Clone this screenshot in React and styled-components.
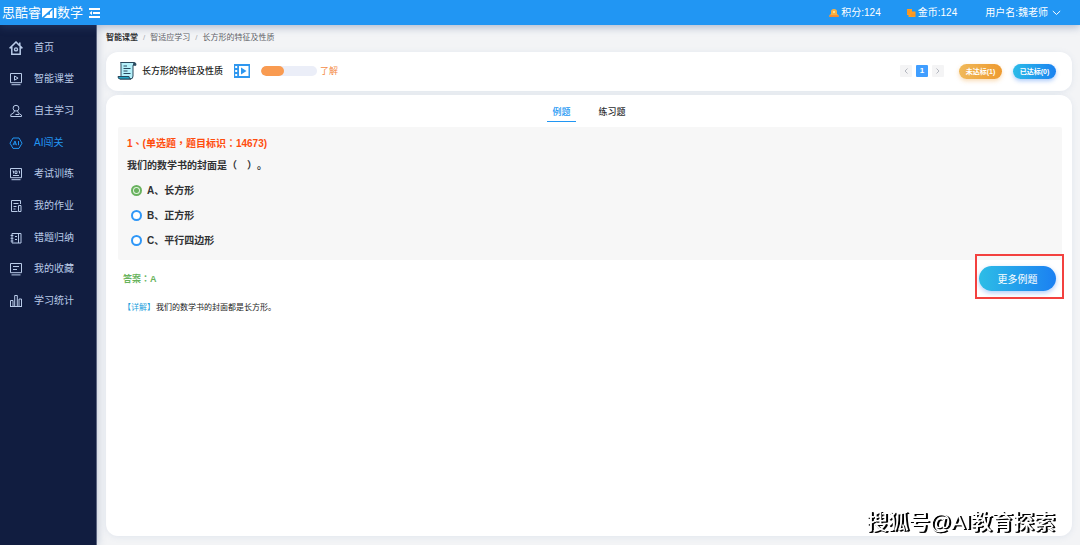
import React, { useState } from "react";
import styled, { createGlobalStyle } from "styled-components";

const GlobalStyle = createGlobalStyle`
  * {
    box-sizing: border-box;
  }
  body {
    margin: 0;
    background: #f3f4f6;
    color: #303133;
    font-family: "Liberation Sans", "Noto Sans CJK SC", sans-serif;
    font-size: 10px;
    line-height: 14px;
  }
  button, input {
    font-family: inherit;
    margin: 0;
  }
  svg {
    display: block;
    flex: none;
  }
`;

const Page = styled.div`
  display: flex;
  flex-direction: column;
  min-height: 100vh;
`;

const Header = styled.header`
  display: flex;
  align-items: center;
  justify-content: space-between;
  height: 25px;
  padding: 0 19px 0 2px;
  color: #fff;
  background: #2196f3;
  box-shadow: 0 2px 8px rgba(60, 90, 140, 0.4);
  z-index: 2;
`;

const Brand = styled.div`
  display: flex;
  align-items: center;
  font-size: 13px;
  line-height: 18px;
`;

const IconButton = styled.button`
  display: flex;
  padding: 0;
  margin-left: 6px;
  border: 0;
  color: inherit;
  background: none;
  cursor: pointer;
`;

const Account = styled.div`
  display: flex;
  align-items: center;
  gap: 25px;
`;

const Stat = styled.span`
  display: flex;
  align-items: center;
  gap: 2px;
`;

const UserButton = styled.button`
  display: flex;
  align-items: center;
  gap: 4px;
  margin-left: 3px;
  padding: 0;
  border: 0;
  color: inherit;
  font-size: 10px;
  line-height: 14px;
  background: none;
  cursor: pointer;
`;

const Body = styled.div`
  display: flex;
  flex: 1;
`;

const Sidebar = styled.nav`
  flex: none;
  width: 97px;
  padding-top: 7px;
  background: #111d40;
  border-right: 1px solid #5c6580;
  box-shadow: 1px 0 8px rgba(60, 90, 140, 0.25);
  z-index: 1;
`;

const NavList = styled.ul`
  display: grid;
  grid-auto-rows: 1fr;
  height: 285px;
  margin: 0;
  padding: 0;
  list-style: none;
`;

const NavLink = styled.a`
  display: flex;
  align-items: center;
  gap: 11px;
  height: 100%;
  padding-left: 9px;
  color: ${(props) => (props.$active ? "#2196f3" : "#b9cbe8")};
  text-decoration: none;
`;

const Main = styled.main`
  display: flex;
  flex: 1;
  flex-direction: column;
  min-width: 0;
  padding: 6px 8px 9px 9px;
`;

const Breadcrumb = styled.nav`
  display: flex;
  gap: 5px;
  margin-bottom: 7px;
  color: #606266;
  font-size: 8px;
  span {
    color: #a8abb2;
  }
`;

const Crumb = styled.a`
  color: ${(props) => (props.$root ? "#303133" : "#606266")};
  font-weight: ${(props) => (props.$root ? 700 : 400)};
  text-decoration: none;
`;

const Card = styled.section`
  border-radius: 12px;
  background: #fff;
  box-shadow: 0 1px 6px rgba(100, 130, 180, 0.12);
`;

const TopicCard = styled(Card)`
  display: flex;
  align-items: center;
  height: 39px;
  margin-bottom: 4px;
  padding: 0 16px 1px 11px;
`;

const TopicTitle = styled.h1`
  margin: 0 11px 0 5px;
  font-size: 9px;
  font-weight: 500;
  color: #222;
`;

const Progress = styled.div`
  width: 56px;
  height: 10px;
  margin: 0 3px 0 11px;
  border-radius: 5px;
  background: #ebeef8;
  overflow: hidden;
`;

const ProgressFill = styled.div`
  height: 100%;
  border-radius: 5px;
  background: #f99b51;
`;

const Level = styled.span`
  color: #f48b48;
  font-size: 9px;
`;

const Pager = styled.div`
  display: flex;
  gap: 4px;
  margin: 0 15px 0 auto;
`;

const PageButton = styled.button`
  display: flex;
  align-items: center;
  justify-content: center;
  width: 12px;
  height: 12px;
  padding: 0;
  border: 0;
  border-radius: 1px;
  font-size: 8px;
  font-weight: 700;
  line-height: 12px;
  color: ${(props) => (props.$active ? "#fff" : "#b4b7bf")};
  background: ${(props) => (props.$active ? "#409eff" : "#f4f4f5")};
`;

const Pill = styled.button`
  min-width: 43px;
  height: 15px;
  margin-left: ${(props) => (props.$tone === "blue" ? "11px" : "0")};
  padding: 0;
  border: 0;
  border-radius: 8px;
  color: #fff;
  font-size: 7px;
  font-weight: 700;
  line-height: 15px;
  background: ${(props) =>
    props.$tone === "blue"
      ? "linear-gradient(90deg, #2bbbe8, #1a82f0)"
      : "linear-gradient(90deg, #f0b95a, #ee9a30)"};
  box-shadow: 0 2px 4px
    ${(props) =>
      props.$tone === "blue"
        ? "rgba(26, 110, 240, 0.35)"
        : "rgba(238, 154, 48, 0.35)"};
`;

const ContentCard = styled(Card)`
  flex: 1;
  padding: 7px 10px 10px 12px;
`;

const Tabs = styled.div`
  display: flex;
  justify-content: center;
  gap: 18px;
  margin-bottom: 5px;
  padding-right: 2px;
`;

const Tab = styled.button`
  height: 20px;
  padding: 0 5px;
  border: 0;
  border-bottom: 1px solid
    ${(props) => (props.$active ? "#2196f3" : "transparent")};
  color: ${(props) => (props.$active ? "#2196f3" : "#303133")};
  font-size: 9px;
  font-weight: 500;
  background: none;
  cursor: pointer;
`;

const Question = styled.fieldset`
  min-width: 0;
  margin: 0;
  padding: 10px 9px 7px;
  border: 0;
  border-radius: 2px;
  font-weight: 700;
  background: #f7f7f7;
`;

/* TC punctuation sits in the middle of its cell */
const QuestionMeta = styled.p`
  margin: 0 0 8px;
  color: #ff4d0d;
  font-family: "Liberation Sans", "Noto Sans CJK TC", sans-serif;
`;

const QuestionText = styled.p`
  margin: 0 0 5px;
  text-spacing-trim: space-all;
`;

const Option = styled.label`
  display: flex;
  align-items: center;
  gap: 5px;
  height: 25px;
  padding-left: 4px;
  cursor: pointer;
`;

const Radio = styled.input`
  appearance: none;
  width: 11px;
  height: 11px;
  border: 2px solid #2f97f7;
  border-radius: 50%;
  background: #fff;
  &:checked {
    border-color: #69b25f;
    background: radial-gradient(#69b25f 2px, #e4f3e0 3px);
  }
`;

const AnswerRow = styled.div`
  display: flex;
  align-items: center;
  justify-content: space-between;
  margin-bottom: 10px;
  padding: 6px 6px 0 5px;
`;

const Answer = styled.strong`
  color: #68b35c;
  font-family: "Liberation Sans", "Noto Sans CJK TC", sans-serif;
  font-size: 9px;
`;

const MoreWrap = styled.div`
  position: relative;
`;

const Highlight = styled.div`
  position: absolute;
  inset: -12px -8px -8px -4px;
  border: 2px solid #f3413f;
  pointer-events: none;
`;

const MoreButton = styled.button`
  display: block;
  width: 77px;
  height: 25px;
  padding: 0;
  border: 0;
  border-radius: 13px;
  color: #fff;
  font-size: 10px;
  background: linear-gradient(90deg, #2dbde6, #1b80f2);
  box-shadow: 0 2px 5px rgba(26, 110, 240, 0.35);
  cursor: pointer;
`;

const Detail = styled.p`
  margin: 0;
  padding-left: 5px;
  color: #222;
  font-size: 8px;
  span {
    margin-right: 1px;
    color: #1e9fdc;
  }
`;

const Watermark = styled.div`
  position: fixed;
  right: 25px;
  bottom: 9px;
  color: #fff;
  font-size: 21px;
  font-weight: 500;
  line-height: 28px;
  white-space: nowrap;
  text-shadow: 1px 1px 0 #000, 2px 1px 0 #000;
`;

const NavIcon = ({ children }) => (
  <svg
    width="14"
    height="14"
    viewBox="0 0 14 14"
    fill="none"
    stroke="currentColor"
    aria-hidden="true"
  >
    {children}
  </svg>
);

const navItems = [
  {
    label: "首页",
    icon: (
      <>
        <path d="M.6 7.400 7 1l6.400 6.400M2.800 6v7.200h8.400V6M10.800 1.500v3" strokeWidth="1.500" />
        <circle cx="7" cy="8.400" r="1.500" strokeWidth="1.400" />
      </>
    ),
  },
  {
    label: "智能课堂",
    icon: <path d="M1.500 1.500h11v9.200h-11zM5.500 4v4.200l3.600-2.100zM2.500 12.700h9" />,
  },
  {
    label: "自主学习",
    icon: (
      <>
        <circle cx="7" cy="4.200" r="2.900" />
        <path d="M5.500 6.800 4.500 9l-2.700 1.600v1.900h10.700v-1.400L9.600 9.300 8.500 6.800M6.500 10.500h3.500" />
      </>
    ),
  },
  {
    label: "AI闯关",
    icon: (
      <>
        <path d="M4 2h6l3 5.200-3 5.200H4L1 7.200z" />
        <path d="m4 9.200 2-4.200 1.500 4.200M4.800 8H7M9.500 5v4.200" />
      </>
    ),
  },
  {
    label: "考试训练",
    icon: (
      <path d="M1.500 1.500h11v9.200h-11zM2.500 12.700h9M3.500 4h1v2.500M6 4h2v2.500H6zM9.500 4h1v2.500M4 8.500h6" />
    ),
  },
  {
    label: "我的作业",
    icon: <path d="M11.500 5V1.500h-9v11h6M4.500 4.500h5M4.500 7.500h3M4.500 10h2M9.500 6.500h2.500v6H9.500z" />,
  },
  {
    label: "错题归纳",
    icon: <path d="M3 2.500h9v9.500H3zM9.500 3v9M1.600 4.500h2.800M1.600 7.300h2.800M1.600 10h2.800M6 5.500h2M6 8.500h2" />,
  },
  {
    label: "我的收藏",
    icon: <path d="M1.500 1.500h11v9.200h-11zM2.500 12.900h9M4 4.500h6M4 7.500h4" />,
  },
  {
    label: "学习统计",
    icon: <path d="M1.500 6.500H4v6H1.500zM5.700 1.500h2.600v11H5.700zM10 5h2.500v7.500H10zM1 12.500h12" />,
  },
];

const options = [
  { key: "A", text: "长方形" },
  { key: "B", text: "正方形" },
  { key: "C", text: "平行四边形" },
];

const LogoMark = () => (
  <svg width="16" height="12" viewBox="0 0 16 12" fill="#fff" aria-hidden="true">
    <path d="M1 1h10.5L1 10.5zM11.5 2.8V11H3zM13 1h2.5v10H13z" />
    <path d="m5 7.8 4-3.6v3.6z" fill="#2196f3" />
  </svg>
);

const ScrollIcon = () => (
  <svg width="20" height="20" viewBox="0 0 20 20" aria-hidden="true">
    <path
      d="M5 1.500h12.500q1.500 0 1.500 2.700h-3V15q0 3-2.500 3H3Q4 17 4 14.500V4Q4 2 3.500 1.500z"
      fill="#b5f0fa"
      stroke="#29485d"
    />
    <path d="M1 15.500h11q0 2.500 2 2.500H3q-2 0-2-2.500z" fill="#20a5c4" stroke="#29485d" />
    <path d="M16 4.200V3q0-1.500 1.500-1.500T19 4.200z" fill="#29485d" />
    <path d="M6.500 5h3.500M6.500 7.500h7M6.500 10h4M6.500 12.500h7" stroke="#29485d" />
  </svg>
);

const VideoIcon = () => (
  <svg width="16" height="14" viewBox="0 0 16 14" aria-hidden="true">
    <path d="M0 0h16v14H0z" fill="#2f97ef" />
    <path d="M5 2h9.500v10H5z" fill="#fff" />
    <path d="m7 3.500 5.500 3.500L7 10.500z" fill="#2f97ef" />
    <path d="M1.200 2h2v2h-2zM1.200 6h2v2h-2zM1.200 10h2v2h-2z" fill="#fff" />
  </svg>
);

export default function App() {
  const [tab, setTab] = useState("例题");
  const [answer, setAnswer] = useState("A");

  return (
    <Page>
      <GlobalStyle />
      <Header>
        <Brand>
          思酷睿
          <LogoMark />
          数学
          <IconButton aria-label="收起菜单">
            <svg width="11" height="10" viewBox="0 0 11 10" fill="none" stroke="#fff">
              <path d="M0 1h11M4 5h7M0 9h11" strokeWidth="1.800" />
              <path d="M3 3 .5 5 3 7z" fill="#fff" stroke="none" />
            </svg>
          </IconButton>
        </Brand>
        <Account>
          <Stat>
            <svg width="10" height="10" viewBox="0 0 10 10" aria-hidden="true">
              <path d="M2 6V3.500Q2 1 5 1t3 2.500V6l1.500 1v2h-9V7z" fill="#fbb040" />
              <path d="M.5 7.200h9V9h-9z" fill="#f58a2e" />
              <path d="M4 3h2v2H4z" fill="#ffe08a" />
            </svg>
            积分:124
          </Stat>
          <Stat>
            <svg width="10" height="10" viewBox="0 0 10 10" aria-hidden="true">
              <path d="M1 1h5v2.500h3.500V9H2.500V7H1z" fill="#ff9d21" />
              <path d="M1 3h3M1 5h3M5 7h4" stroke="#f08a2a" strokeWidth=".7" />
            </svg>
            金币:124
          </Stat>
          <UserButton>
            用户名:魏老师
            <svg width="9" height="6" viewBox="0 0 9 6" fill="none" stroke="#fff">
              <path d="m.8 1 3.700 3.500L8.200 1" />
            </svg>
          </UserButton>
        </Account>
      </Header>
      <Body>
        <Sidebar aria-label="主菜单">
          <NavList>
            {navItems.map((item) => (
              <li key={item.label}>
                <NavLink href="#" $active={item.label === "AI闯关"}>
                  <NavIcon>{item.icon}</NavIcon>
                  {item.label}
                </NavLink>
              </li>
            ))}
          </NavList>
        </Sidebar>
        <Main>
          <Breadcrumb aria-label="路径">
            <Crumb href="#" $root>
              智能课堂
            </Crumb>
            <span>/</span>
            <Crumb href="#">智适应学习</Crumb>
            <span>/</span>
            <Crumb href="#">长方形的特征及性质</Crumb>
          </Breadcrumb>
          <TopicCard>
            <ScrollIcon />
            <TopicTitle>长方形的特征及性质</TopicTitle>
            <VideoIcon />
            <Progress>
              <ProgressFill style={{ width: "41%" }} />
            </Progress>
            <Level>了解</Level>
            <Pager>
              <PageButton aria-label="上一页">
                <svg width="6" height="8" viewBox="0 0 6 8" fill="none" stroke="currentColor">
                  <path d="M4.500 1.500 2 4l2.500 2.500" />
                </svg>
              </PageButton>
              <PageButton $active>1</PageButton>
              <PageButton aria-label="下一页">
                <svg width="6" height="8" viewBox="0 0 6 8" fill="none" stroke="currentColor">
                  <path d="M1.500 1.500 4 4 1.500 6.500" />
                </svg>
              </PageButton>
            </Pager>
            <Pill $tone="orange">未达标(1)</Pill>
            <Pill $tone="blue">已达标(0)</Pill>
          </TopicCard>
          <ContentCard>
            <Tabs role="tablist">
              {["例题", "练习题"].map((name) => (
                <Tab
                  key={name}
                  role="tab"
                  aria-selected={tab === name}
                  $active={tab === name}
                  onClick={() => setTab(name)}
                >
                  {name}
                </Tab>
              ))}
            </Tabs>
            <Question>
              <QuestionMeta>1、(单选题，题目标识：14673)</QuestionMeta>
              <QuestionText>我们的数学书的封面是（　）。</QuestionText>
              {options.map((option) => (
                <Option key={option.key}>
                  <Radio
                    type="radio"
                    name="answer"
                    checked={answer === option.key}
                    onChange={() => setAnswer(option.key)}
                  />
                  {option.key}、{option.text}
                </Option>
              ))}
            </Question>
            <AnswerRow>
              <Answer>答案：A</Answer>
              <MoreWrap>
                <MoreButton>更多例题</MoreButton>
                <Highlight />
              </MoreWrap>
            </AnswerRow>
            <Detail>
              <span>【详解】</span>我们的数学书的封面都是长方形。
            </Detail>
          </ContentCard>
        </Main>
      </Body>
      <Watermark>搜狐号@AI教育探索</Watermark>
    </Page>
  );
}
